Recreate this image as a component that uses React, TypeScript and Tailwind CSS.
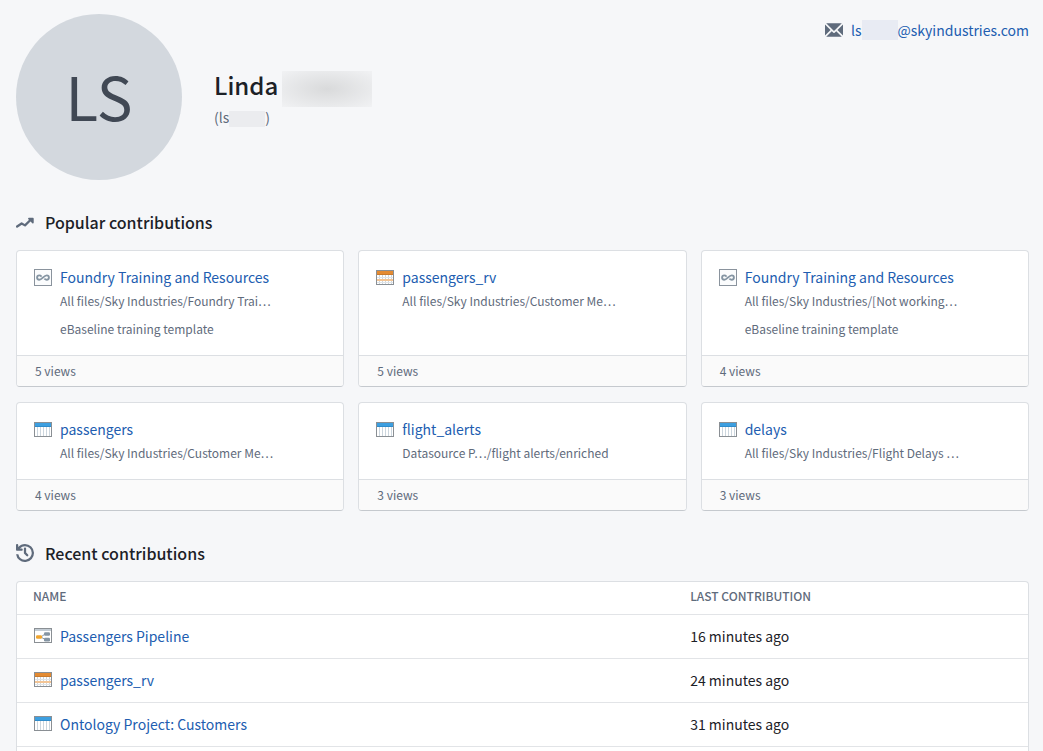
import React from "react";

type IconKind = "project" | "orange" | "blue" | "pipeline";

const popular: { icon: IconKind; title: string; path: string; note?: string; views: number }[] = [
  {
    icon: "project",
    title: "Foundry Training and Resources",
    path: "All files/Sky Industries/Foundry Trai…",
    note: "eBaseline training template",
    views: 5,
  },
  { icon: "orange", title: "passengers_rv", path: "All files/Sky Industries/Customer Me…", views: 5 },
  {
    icon: "project",
    title: "Foundry Training and Resources",
    path: "All files/Sky Industries/[Not working…",
    note: "eBaseline training template",
    views: 4,
  },
  { icon: "blue", title: "passengers", path: "All files/Sky Industries/Customer Me…", views: 4 },
  { icon: "blue", title: "flight_alerts", path: "Datasource P…/flight alerts/enriched", views: 3 },
  { icon: "blue", title: "delays", path: "All files/Sky Industries/Flight Delays …", views: 3 },
];

const recent: { icon: IconKind; name: string; when: string }[] = [
  { icon: "pipeline", name: "Passengers Pipeline", when: "16 minutes ago" },
  { icon: "orange", name: "passengers_rv", when: "24 minutes ago" },
  { icon: "blue", name: "Ontology Project: Customers", when: "31 minutes ago" },
];

const FileIcon = ({ kind }: { kind: IconKind }) => {
  if (kind === "project") {
    return (
      <svg width="18" height="18" viewBox="0 0 18 18" className="shrink-0" aria-hidden="true">
        <rect x="0.5" y="0.5" width="17" height="16" fill="#fbfcfd" stroke="#8a939d" />
        <path
          d="M7.600 9.800C6.900 10.500 6.300 11 5.300 11a2.200 2.200 0 0 1 0-4.400c2.600 0 4.600 4.400 7.400 4.400a2.200 2.200 0 0 0 0-4.400c-1 0-1.600.5-2.300 1.200"
          transform="matrix(1 0 0 -1 0 17.400)"
          fill="none"
          stroke="#8595a3"
          strokeWidth="1.900"
        />
      </svg>
    );
  }
  if (kind === "pipeline") {
    return (
      <svg width="18" height="18" viewBox="0 0 18 18" className="shrink-0" aria-hidden="true">
        <rect x="0.5" y="1.500" width="17" height="14" fill="#fff" stroke="#8a8f94" />
        <path d="M1 3h16" stroke="#c3ccd4" strokeWidth="2" />
        <path d="M7 10l4-3M7 10l4 2.500" stroke="#8595a3" fill="none" />
        <rect x="2" y="8.200" width="6" height="3.600" rx="1.200" fill="#f0a52f" />
        <rect x="10" y="5.200" width="6" height="3.600" rx="1.200" fill="#8595a3" />
        <rect x="10" y="10.800" width="6" height="3.600" rx="1.200" fill="#8595a3" />
      </svg>
    );
  }
  const orange = kind === "orange";
  return (
    <svg width="18" height="18" viewBox="0 0 18 18" className="shrink-0" aria-hidden="true">
      <rect x="0.5" y="1.500" width="17" height="14" fill="#fff" />
      <path d="M3.500 6v9M6.500 6v9M9.500 6v9M12.500 6v9M15.500 6v9" stroke="#ccd6de" />
      {orange && <path d="M1 8.500h16M1 13.500h16" stroke="#dfe4e8" />}
      {orange && <path d="M1 11h16" stroke="#f3c596" strokeWidth="2" />}
      <path d="M1 3.500h16" stroke={orange ? "#e38b33" : "#3d9fe0"} strokeWidth="4" />
      <path d="M1 5.500h16" stroke={orange ? "#c97a2c" : "#2f8bca"} />
      <rect x="0.5" y="1.500" width="17" height="14" fill="none" stroke="#8a8f94" />
    </svg>
  );
};

const EnvelopeIcon = () => (
  <svg width="18" height="18" viewBox="0 0 16 16" fill="#5f6b7c" aria-hidden="true">
    <path d="M0 3.060v9.880L4.940 8 0 3.060zM14.940 2H1.060L8 8.940 14.940 2zm-6.410 8.530c-.14.14-.32.22-.53.22s-.39-.08-.53-.22L6 9.060 1.060 14h13.880L10 9.060l-1.470 1.470zM11.060 8L16 12.940V3.060L11.060 8z" />
  </svg>
);

const TrendIcon = () => (
  <svg width="18" height="18" viewBox="0 0 16 16" fill="none" stroke="#5f6b7c" strokeWidth="2" strokeLinecap="round" strokeLinejoin="round" aria-hidden="true">
    <path d="M1 12l4-2.700 3 1.700 5.500-5.500" />
    <path d="M11.500 5H15v3.500z" fill="#5f6b7c" strokeWidth="1.500" />
  </svg>
);

const HistoryIcon = () => (
  <svg width="18" height="18" viewBox="0 0 16 16" fill="#5f6b7c" aria-hidden="true">
    <path d="M8 3c-.55 0-1 .45-1 1v4c0 .28.11.53.29.71l2 2a1.003 1.003 0 0 0 1.420-1.420L9 7.590V4c0-.55-.45-1-1-1z" />
    <path d="M8 0a7.950 7.950 0 0 0-6 2.740V1c0-.55-.45-1-1-1S0 .45 0 1v4c0 .55.45 1 1 1h4c.55 0 1-.45 1-1s-.45-1-1-1H3.540A5.980 5.980 0 0 1 8 2a6 6 0 1 1-5.920 7H.06A8 8 0 1 0 8 0z" />
  </svg>
);

const SectionTitle = ({ icon, children }: { icon: React.ReactNode; children: React.ReactNode }) => (
  <h2 className="flex items-center gap-[11px] text-base leading-6 font-medium text-[#1c2127]">
    {icon}
    {children}
  </h2>
);

const App = () => {
  return (
    <main className="flex min-h-screen flex-col bg-[#f6f7f9] pt-3.5 pr-3.5 pl-4 font-['Noto_Sans_CJK_SC',sans-serif] text-[#1c2127]">
      <header className="flex items-start justify-between">
        <div className="flex items-center gap-8">
          <div className="flex size-[166px] items-center justify-center rounded-full bg-[#d3d8de] pb-1 text-6xl text-[#404854]">LS</div>
          <div className="pb-1">
            <h1 className="flex items-center gap-1 text-2xl leading-8 font-medium">
              Linda
              <span className="mt-2 h-9 w-[90px] bg-radial from-[#d9dadb] to-[#f1f2f4]" />
            </h1>
            <p className="flex items-center text-sm leading-3 text-[#5f6b7c]">
              (ls
              <span className="mt-1 h-4 w-9 bg-[#ebecef]" />)
            </p>
          </div>
        </div>
        <a href="mailto:@skyindustries.com" className="mt-1.5 flex items-center text-sm leading-5 text-[#215db0]">
          <span className="mr-2">
            <EnvelopeIcon />
          </span>
          ls
          <span className="h-5 w-9 bg-[#e8ebf3]" />
          @skyindustries.com
        </a>
      </header>

      <section className="mt-[30px]">
        <SectionTitle icon={<TrendIcon />}>Popular contributions</SectionTitle>
        <div className="mt-4 grid grid-cols-3 gap-x-3.5 gap-y-[15px]">
          {popular.map((item, i) => (
            <article key={i} className="flex flex-col overflow-hidden rounded border border-[#dcdfe3] border-b-[#c5c9ce] bg-white">
              <div className="flex flex-1 gap-2 px-[17px] pt-[15px] pb-[17px]">
                <div className="pt-[3px]">
                  <FileIcon kind={item.icon} />
                </div>
                <div className="min-w-0">
                  <a href="#" className="block text-sm leading-[22px] text-[#215db0]">
                    {item.title}
                  </a>
                  <p className="mt-1 text-xs leading-[18px] text-[#5f6b7c]">{item.path}</p>
                  {item.note && <p className="mt-2.5 text-xs leading-[18px] text-[#5f6b7c]">{item.note}</p>}
                </div>
              </div>
              <footer className="border-t border-[#dcdfe3] bg-[#fafafa] px-[18px] py-1.5 text-xs leading-[18px] text-[#5f6b7c]">
                {item.views} views
              </footer>
            </article>
          ))}
        </div>
      </section>

      <section className="mt-[30px] flex flex-1 flex-col">
        <SectionTitle icon={<HistoryIcon />}>Recent contributions</SectionTitle>
        <div className="mt-4 flex-1 rounded-t border border-b-0 border-[#dcdfe3] bg-white">
          <table className="w-full table-fixed text-left">
            <thead>
              <tr className="h-8 border-b border-[#e2e4e7] text-xs leading-4 text-[#5f6b7c]">
                <th className="w-[65%] px-4 pb-1 font-medium">NAME</th>
                <th className="px-4 pb-1 font-medium">LAST CONTRIBUTION</th>
              </tr>
            </thead>
            <tbody>
              {recent.map((row) => (
                <tr key={row.name} className="h-11 border-b border-[#e2e4e7] text-sm">
                  <td className="px-[17px]">
                    <a href="#" className="flex items-center gap-2 text-[#215db0]">
                      <FileIcon kind={row.icon} />
                      {row.name}
                    </a>
                  </td>
                  <td className="px-4">{row.when}</td>
                </tr>
              ))}
            </tbody>
          </table>
        </div>
      </section>
    </main>
  );
};

export default App;
